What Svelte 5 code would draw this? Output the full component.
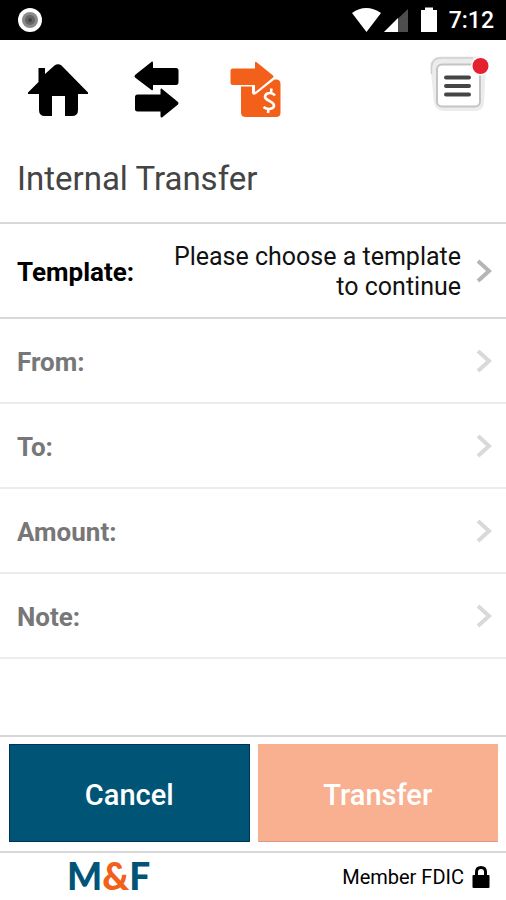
<script lang="ts">
	const rows: { label: string; value: string; enabled: boolean }[] = [
		{ label: "Template:", value: "Please choose a template to continue", enabled: true },
		{ label: "From:", value: "", enabled: false },
		{ label: "To:", value: "", enabled: false },
		{ label: "Amount:", value: "", enabled: false },
		{ label: "Note:", value: "", enabled: false },
	];
</script>

<div class="screen">
	<div class="status">
		<svg width="26" height="26" viewBox="0 0 26 26" aria-hidden="true">
			<circle cx="13" cy="13" r="12" fill="#fff" />
			<circle cx="13" cy="13" r="8" fill="#8a8a8a" />
			<circle cx="13" cy="13" r="5" fill="#666" />
			<circle cx="13" cy="13" r="2" fill="#444" />
		</svg>
		<div class="signals">
			<svg width="86" height="26" viewBox="0 0 86 26" aria-hidden="true">
				<path d="M0 6Q14 -4 29 6L14.500 25Z" fill="#fff" />
				<path d="M56 2V25H32Z" fill="#4d4d4d" />
				<path d="M46 11V25H32Z" fill="#fff" />
				<path d="M69 3H73V0.500H81V3H85V25H69Z" fill="#fff" />
			</svg>
			<span class="time">7:12</span>
		</div>
	</div>

	<nav class="toolbar">
		<div class="shortcuts">
			<button class="icon-button" aria-label="Home">
				<svg width="60" height="58" viewBox="28 61 60 58">
					<path
						d="M38.500 68H45V74L54.500 65.500Q58 63 61.500 65.500L88 92.500V94H78V110Q78 116 72 116H65V96H52V116H45Q39 116 39 110V94H28V92.500L38.500 82Z"
					/>
				</svg>
			</button>
			<button class="icon-button" aria-label="Transactions">
				<svg width="46" height="58" viewBox="134 61 46 58">
					<path
						d="M152 61.500Q153 61 153 63V68H176Q178.500 68 178.500 70.500V82Q178.500 85 176 85H153V89Q153 91 151.500 90L135 77.500Q134 76 135 75Z"
					/>
					<path
						d="M161.500 88.500Q160.500 88 160.500 90V94.500H137.500Q135 94.500 135 97V109Q135 111.500 137.500 111.500H160.500V116Q160.500 118 162 117.500L178 104.500Q179 103 178 102Z"
					/>
				</svg>
			</button>
			<button class="icon-button" aria-label="Internal transfer">
				<svg width="52" height="58" viewBox="230 61 52 58" fill="#f2601a">
					<path
						d="M233 68.500H255V63Q255 61 257 62.500L273 75.500Q274 76.500 273 77.500L256 91.500Q255 92.500 255 90.500V85H233Q230.500 85 230.500 82.500V71Q230.500 68.500 233 68.500Z"
					/>
					<path
						d="M241 86.500H252V92.500Q252.500 96 256 94L274.500 79.500H277Q280.500 80 280.500 84V112.500Q280.500 117 276 117H246Q241 117 241 112.500Z"
					/>
					<path
						d="M275 95.500Q273 93 270 93C265 93 263.500 97.500 267 99.500L272 102.500C276 105.500 273.500 109 269 109Q266 109 263.500 107M271.500 88.500L271 92.500M268.500 109L268 113"
						fill="none"
						stroke="#fff"
						stroke-width="2.600"
					/>
				</svg>
			</button>
		</div>
		<button class="icon-button" aria-label="Menu, new messages">
			<svg width="60" height="58" viewBox="430 56 60 58">
				<path d="M440 56.500H478Q486 57 486 66L484 103Q483 111 475 111H444Q436 111 434 103L430.500 67Q430 57 440 56.500Z" fill="#ececec" />
				<path d="M431.500 74V67Q432 58 441 58H473" fill="none" stroke="#cfcfcf" stroke-width="1.500" />
				<rect x="437" y="64.500" width="43" height="42" rx="5" fill="#fff" stroke="#c4c4c4" stroke-width="2" />
				<path d="M446 77.500H469M446 86H469M446 94.500H469" stroke="#454545" stroke-width="4" stroke-linecap="round" />
				<circle cx="480.500" cy="66" r="9.500" fill="#fff" />
				<circle cx="480.500" cy="66" r="8" fill="#e5202f" />
			</svg>
		</button>
	</nav>

	<h1>Internal Transfer</h1>

	<main>
		{#each rows as row}
			<button class="row" class:active={row.enabled} disabled={!row.enabled}>
				<span class="label">{row.label}</span>
				<span class="value">{row.value}</span>
				<svg width="16" height="24" viewBox="0 0 16 24" aria-hidden="true">
					<path d="M2 2L13 12L2 22" fill="none" stroke="currentColor" stroke-width="4" />
				</svg>
			</button>
		{/each}
	</main>

	<div class="actions">
		<button class="cancel">Cancel</button>
		<button class="transfer" disabled>Transfer</button>
	</div>

	<footer>
		<div class="logo">M<span>&amp;</span>F</div>
		<div class="member">
			Member FDIC
			<svg width="18" height="24" viewBox="0 0 18 24" aria-hidden="true">
				<path d="M4.500 12V7Q4.500 2.500 9 2.500T13.500 7V12" fill="none" stroke="#000" stroke-width="3" />
				<rect x="0.500" y="10" width="17" height="13" rx="1" />
			</svg>
		</div>
	</footer>
</div>

<style>
:global(body) {
	margin: 0;
	background: #fff;
}

.screen {
	min-height: 100vh;
	display: flex;
	flex-direction: column;
	font-family: Roboto, "Liberation Sans", sans-serif;
	color: #000;
}

button {
	font-family: inherit;
	border: 0;
	margin: 0;
	border-radius: 0;
}

svg {
	display: block;
	flex: none;
}

.status {
	height: 40px;
	box-sizing: border-box;
	padding: 0 12px 0 17px;
	display: flex;
	align-items: center;
	justify-content: space-between;
	background: #000;
}

.signals {
	display: flex;
	align-items: center;
	gap: 11px;
}

.time {
	padding-top: 2px;
	color: #fff;
	font-size: 23px;
	font-weight: 500;
	line-height: 28px;
}

.toolbar {
	display: flex;
	align-items: flex-start;
	justify-content: space-between;
	padding: 16px 16px 0 28px;
}

.shortcuts {
	display: flex;
	gap: 46px;
	padding-top: 5px;
}

.shortcuts .icon-button:last-child {
	margin-left: 4px;
}

.icon-button {
	padding: 0;
	background: none;
	cursor: pointer;
}

h1 {
	margin: 0;
	padding: 40px 17px 23px;
	font-size: 33px;
	line-height: 40px;
	font-weight: 400;
	color: #444;
	border-bottom: 2px solid #d8d8d8;
}

main {
	flex: 1;
}

.row {
	width: 100%;
	min-height: 85px;
	box-sizing: border-box;
	padding: 0 14px 0 17px;
	display: flex;
	align-items: center;
	gap: 15px;
	background: #fff;
	border-bottom: 2px solid #ececec;
	color: #d9d9d9;
	font-size: 26px;
	line-height: 30px;
	text-align: right;
}

.row.active {
	min-height: 95px;
	border-color: #d8d8d8;
	color: #b5b5b5;
}

.label,
.value {
	padding-top: 3px;
}

.label {
	font-weight: 700;
	color: #777;
}

.active .label {
	color: #000;
}

.value {
	flex: 1;
	font-size: 25px;
	color: #111;
}

.actions {
	display: grid;
	grid-template-columns: 1fr 1fr;
	gap: 8px;
	padding: 7px 8px 9px 9px;
	border-top: 2px solid #d8d8d8;
	border-bottom: 2px solid #d8d8d8;
}

.actions button {
	height: 98px;
	padding: 3px 0 0;
	font-size: 29px;
	font-weight: 500;
	color: #fff;
}

.actions .cancel {
	background: #005577;
	border: 1px solid #00335a;
}

.actions .transfer {
	background: #f9b090;
	border: 1px solid #f9b090;
	border-bottom-color: #d99a80;
}

footer {
	height: 47px;
	display: flex;
	align-items: center;
	justify-content: space-between;
	padding: 0 16px 0 67px;
}

.logo {
	padding-bottom: 2px;
	font-family: Lato, sans-serif;
	font-size: 37px;
	line-height: 44px;
	font-weight: 900;
	color: #005577;
}

.logo span {
	color: #f2601a;
}

.member {
	display: flex;
	align-items: center;
	gap: 8px;
	font-size: 20px;
	line-height: 24px;
}
</style>
